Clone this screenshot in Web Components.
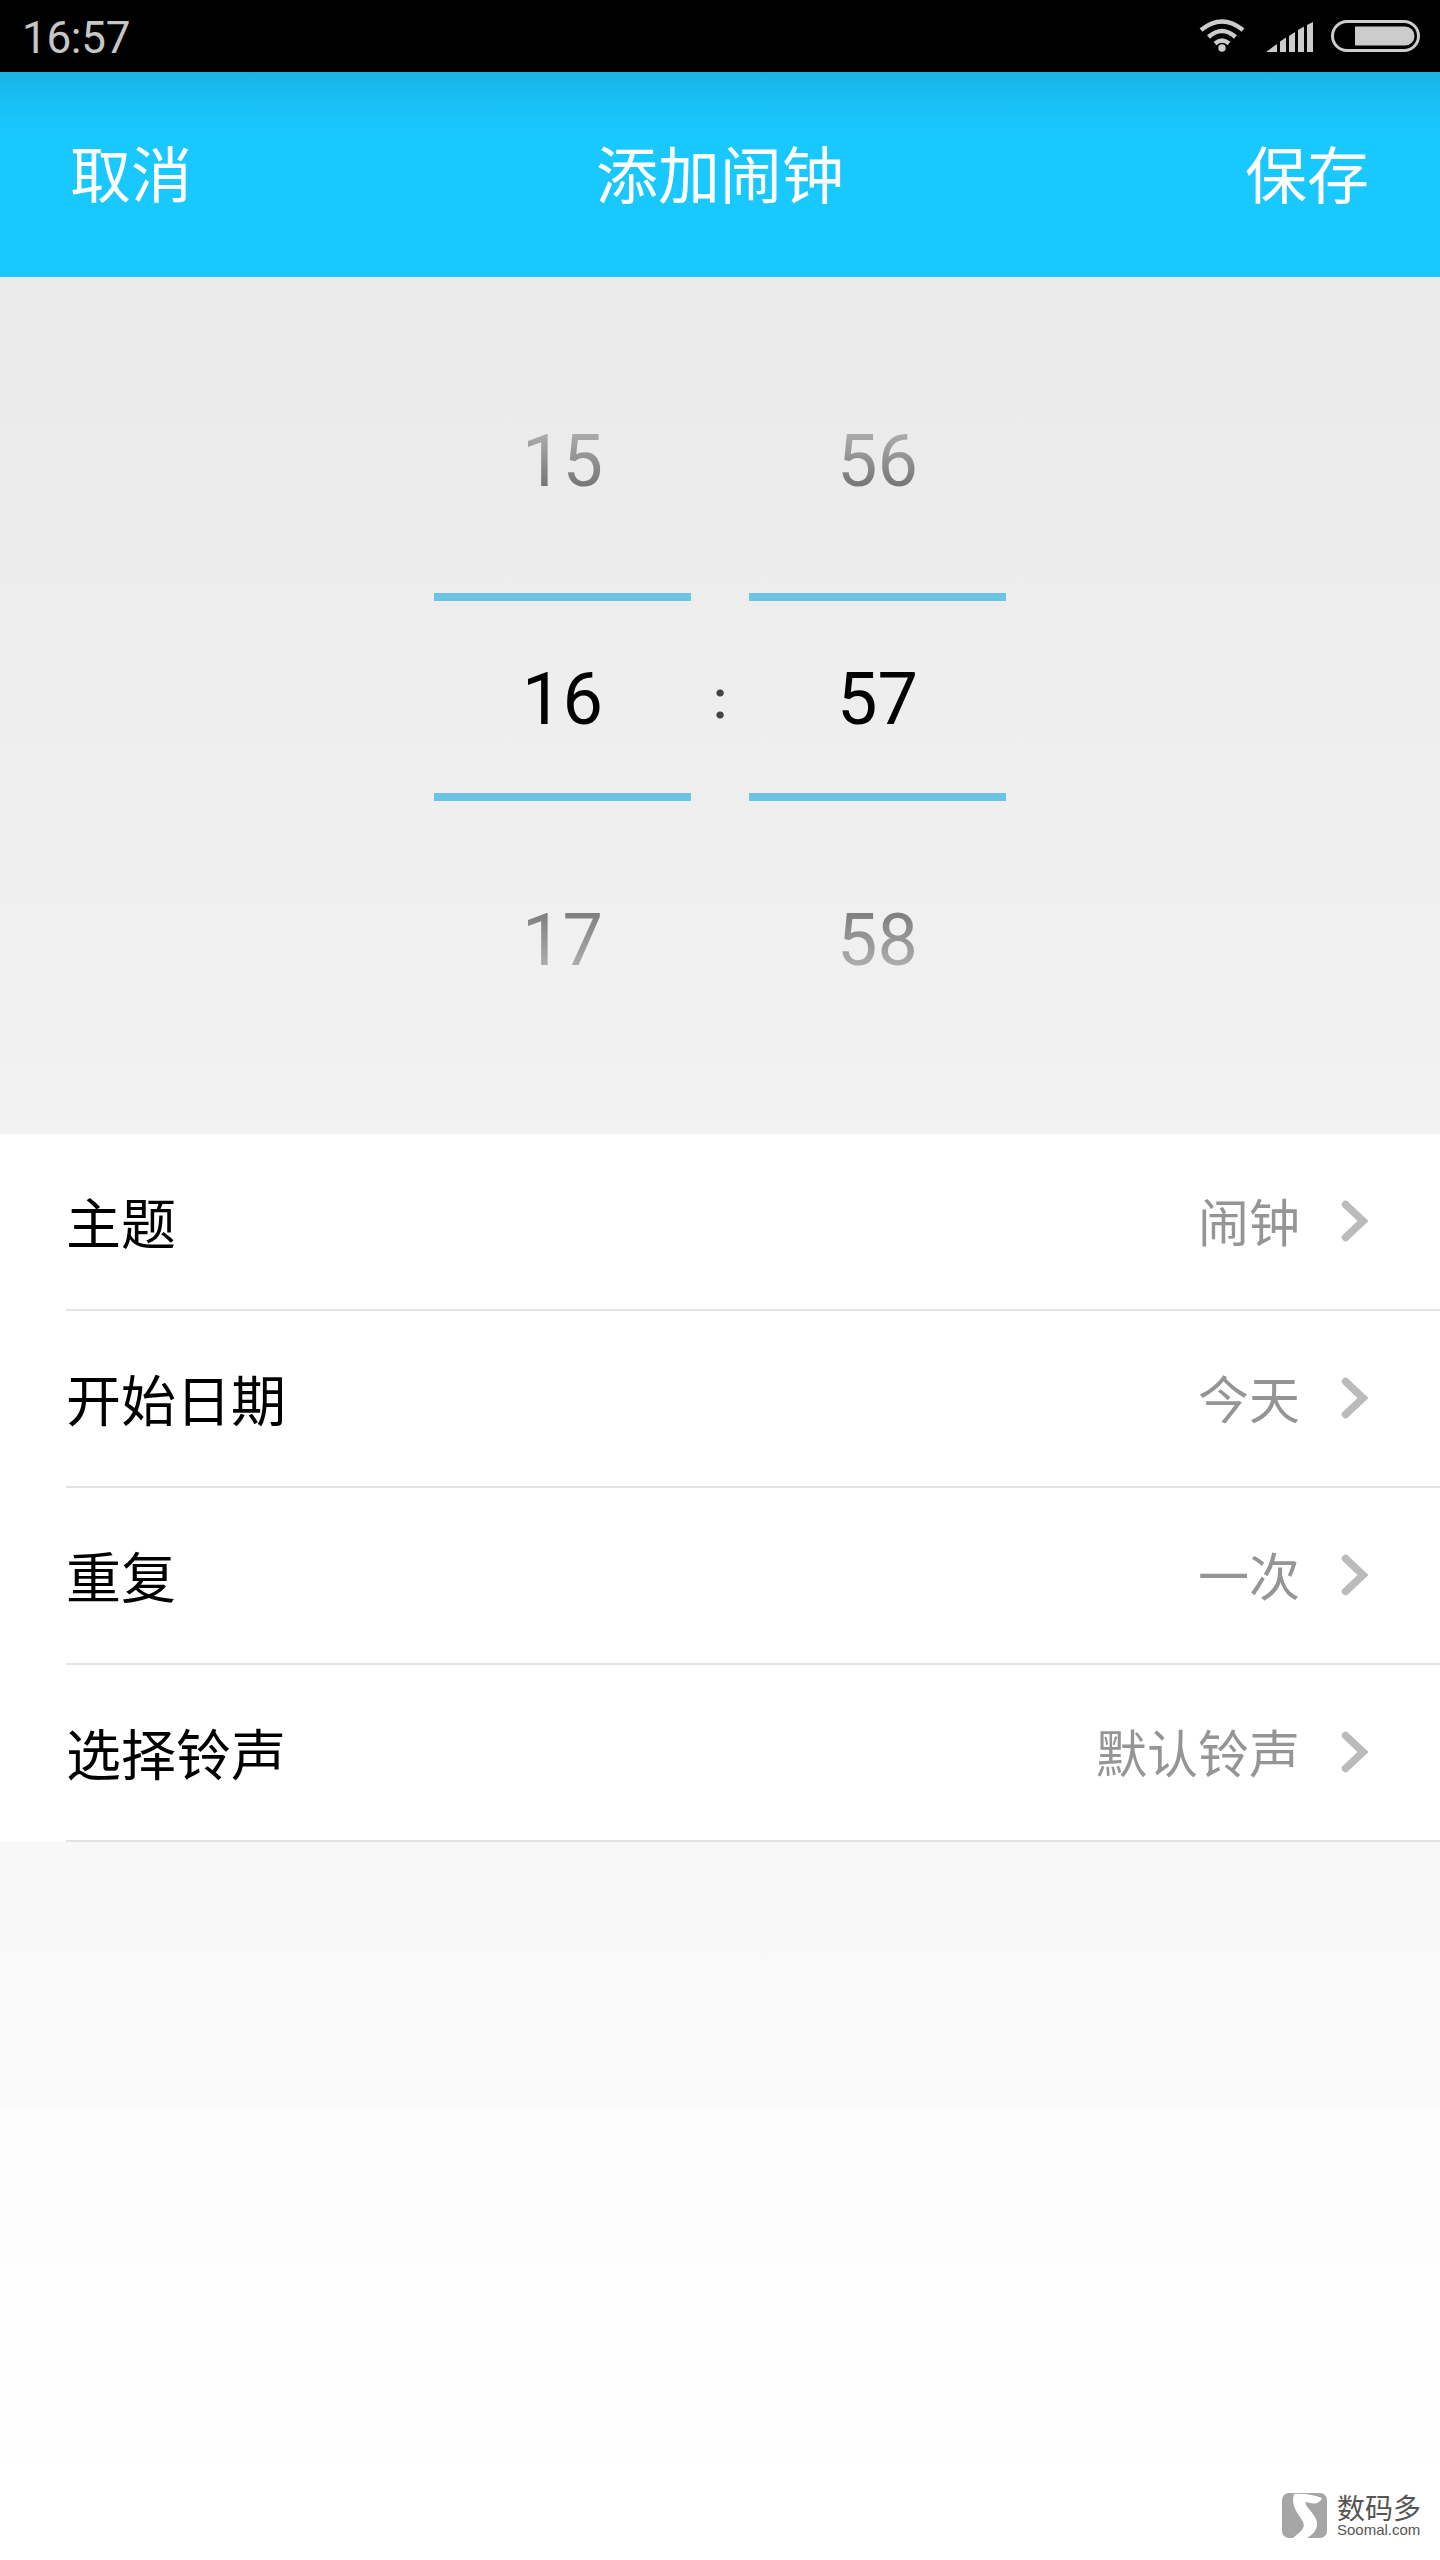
<!DOCTYPE html>
<html lang="zh"><head><meta charset="utf-8"><title>添加闹钟</title>
<style>
html,body{margin:0;padding:0;background:#fff}
body{font-family:"Noto Sans CJK SC","Noto Sans",sans-serif}
</style></head><body>
<alarm-screen>
  <status-bar time="16:57"></status-bar>
  <app-header left="取消" title-text="添加闹钟" right="保存"></app-header>
  <time-picker>
    <picker-column prev="15" cur="16" next="17"></picker-column>
    <picker-colon></picker-colon>
    <picker-column prev="56" cur="57" next="58"></picker-column>
  </time-picker>
  <settings-list>
    <setting-row label="主题" value="闹钟"></setting-row>
    <setting-row label="开始日期" value="今天"></setting-row>
    <setting-row label="重复" value="一次"></setting-row>
    <setting-row label="选择铃声" value="默认铃声"></setting-row>
  </settings-list>
  <soomal-mark></soomal-mark>
</alarm-screen>
<script>
function comp(name, render){
  customElements.define(name, class extends HTMLElement{
    connectedCallback(){
      if(this.shadowRoot) return;
      this.attachShadow({mode:'open'}).innerHTML = render(this);
    }
  });
}
comp('alarm-screen', ()=>`<style>:host{display:flex;flex-direction:column;width:1440px;height:2560px;position:relative;overflow:hidden;background:linear-gradient(#f8f8f8 0,#fafafa 262px,#fcfcfc 268px,#fefefe 500px,#fff 640px) 0 1842px/100% 718px no-repeat #fff}</style><slot></slot>`);
comp('status-bar', el=>`<style>
:host{display:flex;align-items:center;justify-content:space-between;height:72px;background:#000;color:#c6c6c6;padding:0 20px 0 23px;box-sizing:border-box;font:400 44px/72px Roboto,sans-serif}
.t{position:relative;top:2px;left:-1px;letter-spacing:-.3px}
.ic{display:flex;align-items:flex-start;height:72px}
svg{display:block}
</style><span class="t">${el.getAttribute('time')}</span>
<div class="ic">
<svg style="margin-top:19px" width="46" height="34" viewBox="0 0 46 34" fill="none" stroke="#ccc" stroke-width="4.4"><path d="M2 11Q23-6 44 11"/><path d="M9.5 18Q23 6 36.5 18"/><path d="M16 24.5Q23 18.5 30 24.5"/><circle cx="23" cy="29" r="3.7" fill="#ccc" stroke="none"/></svg>
<svg style="margin:22px 0 0 21px" width="47" height="30" viewBox="0 0 47 30" fill="#ccc"><path d="M0 30 11 22V30ZM14 19.5 20 15.5V30H14ZM23 14 29 10V30H23ZM32 8 38 4.5V30H32ZM41 3 47 0V30H41Z"/></svg>
<svg style="margin:20px 0 0 18px" width="89" height="32" viewBox="0 0 89 32"><rect x="1.5" y="1.5" width="86" height="29" rx="14.5" fill="none" stroke="#ccc" stroke-width="3"/><path d="M24 6.500H74a9.500 9.500 0 0 1 0 19H24Z" fill="#ccc"/></svg>
</div>`);
comp('app-header', el=>`<style>
:host{display:grid;grid-template-columns:1fr auto 1fr;align-items:center;height:205px;padding:0 71px 6px;box-sizing:border-box;color:#fff;font:400 62px/1 "Noto Sans CJK SC",sans-serif;background:linear-gradient(#1ab4e2 0,#18bdf0 22px,#19c8ff 60px)}
.l{font-size:61px;margin-left:-1px}
.r{text-align:right}
</style><span class="l">${el.getAttribute('left')}</span><span>${el.getAttribute('title-text')}</span><span class="r">${el.getAttribute('right')}</span>`);
comp('time-picker', ()=>`<style>:host{display:flex;justify-content:center;height:857px;background:linear-gradient(#eaeaeb,#f2f2f2)}</style><slot></slot>`);
comp('picker-column', el=>`<style>
:host{display:flex;flex-direction:column;width:257px;font:400 72px/90px Roboto,sans-serif;text-align:center}
div{box-sizing:border-box}
.p{height:316px;padding-top:140px}
.p span,.n span{display:inline-block;-webkit-background-clip:text;background-clip:text;-webkit-text-fill-color:transparent;color:#8a8a8a}
.p span{background-image:linear-gradient(#ababab 18px,#777 68px)}
.n span{background-image:linear-gradient(#808080 18px,#ababab 68px)}
.c{height:208px;border:solid #6cc3e3;border-width:8px 0;color:#000;padding-top:54px}
.n{height:333px;padding-top:95px}
</style><div class="p"><span>${el.getAttribute('prev')}</span></div><div class="c">${el.getAttribute('cur')}</div><div class="n"><span>${el.getAttribute('next')}</span></div>`);
comp('picker-colon', ()=>`<style>:host{display:block;width:58px;box-sizing:border-box;padding-top:388px;text-align:center;font:500 54px/70px Roboto,sans-serif;color:#444}</style>:`);
comp('settings-list', ()=>`<style>:host{display:block;background:#fff}</style><slot></slot>`);
comp('setting-row', el=>`<style>
:host{display:block;padding-left:66px;height:177px;box-sizing:border-box}
.in{display:flex;align-items:center;height:177px;box-sizing:border-box;border-bottom:2px solid #e3e3e3;padding:0 72px 3px 0}
.l{flex:1;font:400 55px/1 "Noto Sans CJK SC",sans-serif;color:#000}
.v{font:400 51px/1 "Noto Sans CJK SC",sans-serif;color:#959595;margin-right:41px}
svg{display:block;position:relative;top:1px}
</style><div class="in"><span class="l">${el.getAttribute('label')}</span><span class="v">${el.getAttribute('value')}</span><svg width="27" height="42" viewBox="0 0 27 42" fill="none" stroke="#bbb" stroke-width="7.500" stroke-linecap="round" stroke-linejoin="miter"><path d="M4.500 4.500 22 21 4.500 37.500"/></svg></div>`);
comp('soomal-mark', ()=>`<style>
:host{position:absolute;left:1282px;top:2493px;display:flex;gap:10px;color:#555}
.txt{display:flex;flex-direction:column}
.a{font:400 28px/28px "Noto Sans CJK SC",sans-serif}
.b{font:400 15px/16px "Liberation Sans",sans-serif;margin-top:1px}
svg{display:block}
</style><svg width="45" height="45" viewBox="0 0 45 45"><rect width="45" height="45" rx="7" fill="#a6a6a6"/><path d="M12 1C22 0 32 2 40 5 37 12 31 11 24 9 21 12 33 20 35 29 36 37 30 42 25 45H11C18 39 24 35 21 29 18 22 8 14 12 1Z" fill="#fff"/></svg><div class="txt"><span class="a">数码多</span><span class="b">Soomal.com</span></div>`);
</script>
</body></html>
